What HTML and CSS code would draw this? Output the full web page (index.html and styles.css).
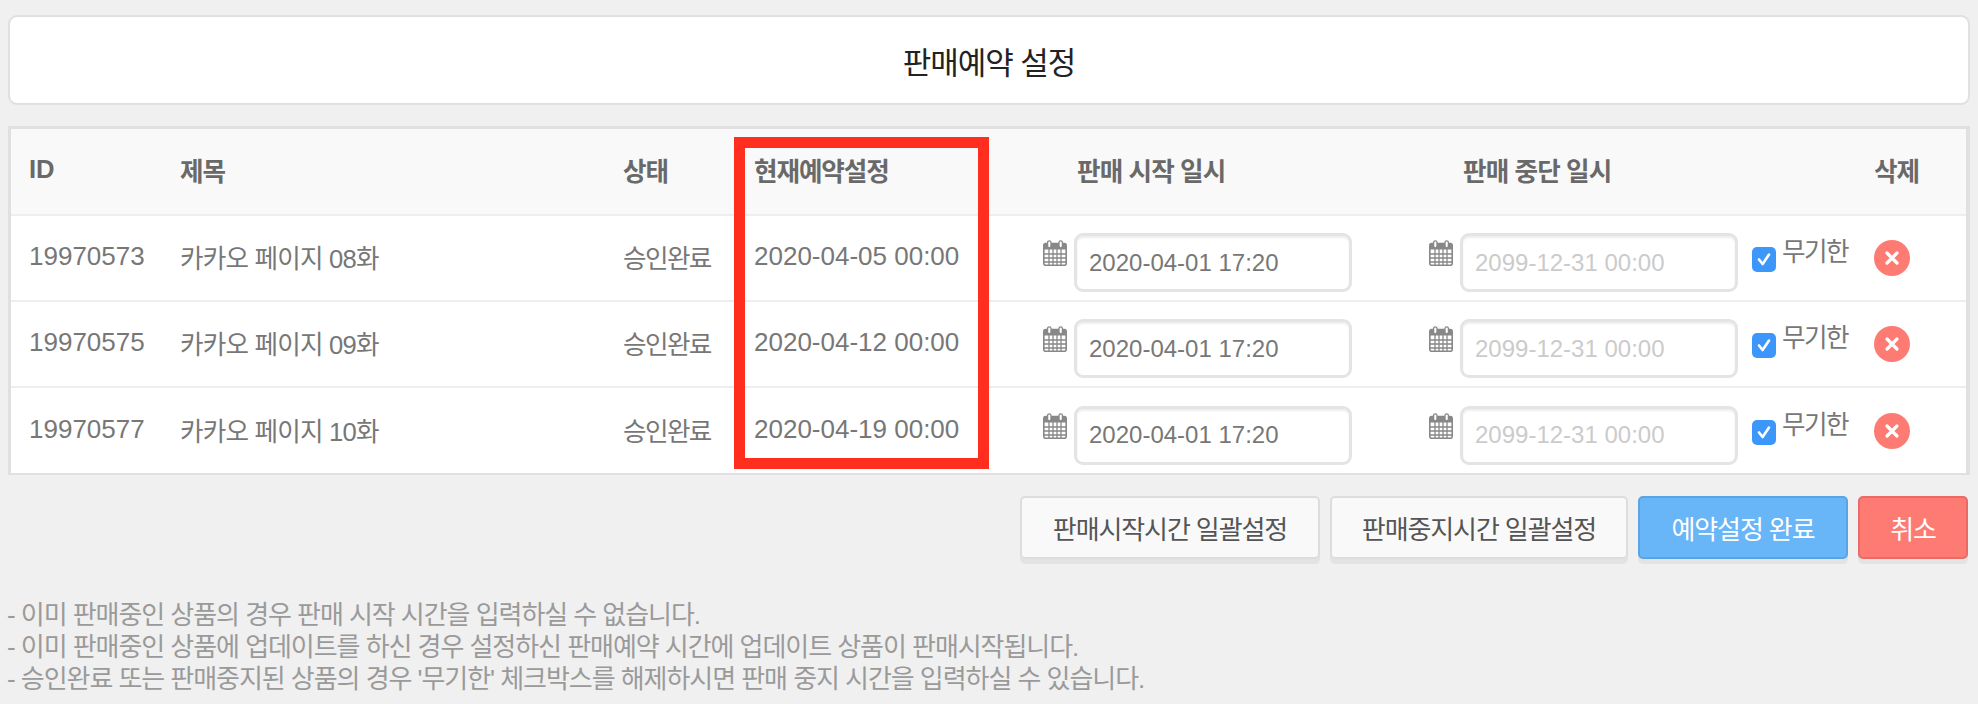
FILE: index.html
```html
<!DOCTYPE html>
<html lang="ko">
<head>
<meta charset="utf-8">
<title>판매예약 설정</title>
<link rel="stylesheet" href="styles.css">
</head>
<body>
<svg class="defs" width="0" height="0" aria-hidden="true">
  <symbol id="cal" viewBox="0 0 24 26">
    <rect x="0.8" y="3.5" width="22.4" height="21.7" rx="2" fill="#fff" stroke="#888" stroke-width="1.6"/>
    <rect x="1" y="3.5" width="22" height="6" fill="#888"/>
    <path d="M1 14h22M1 18h22M1 22h22M6 9v16M10 9v16M14 9v16M18 9v16" stroke="#888" stroke-width="1.3" fill="none"/>
    <rect x="4.6" y="0.8" width="3.4" height="7" rx="1.7" fill="#fff" stroke="#888" stroke-width="1.3"/>
    <rect x="16" y="0.8" width="3.4" height="7" rx="1.7" fill="#fff" stroke="#888" stroke-width="1.3"/>
  </symbol>
</svg>
<main class="page">
  <header class="title-card"><h1>판매예약 설정</h1></header>
  <section class="table-wrap">
    <table class="list">
      <colgroup>
        <col class="c-id"><col class="c-title"><col class="c-state"><col class="c-now"><col class="c-start"><col class="c-end"><col class="c-del">
      </colgroup>
      <thead>
        <tr>
          <th class="first id-head">ID</th><th>제목</th><th>상태</th><th>현재예약설정</th>
          <th class="pad-date">판매 시작 일시</th><th class="pad-date">판매 중단 일시</th><th>삭제</th>
        </tr>
      </thead>
      <tbody>
        <tr>
          <td class="first num">19970573</td><td class="ttl">카카오 페이지 08화</td><td class="state">승인완료</td><td class="num">2020-04-05 00:00</td>
          <td><div class="date"><svg class="cal"><use href="#cal"/></svg><input class="field" value="2020-04-01 17:20"></div></td>
          <td><div class="date"><svg class="cal"><use href="#cal"/></svg><input class="field end" placeholder="2099-12-31 00:00"><label class="unlimited"><span class="check"><svg viewBox="0 0 24 24" width="24" height="24"><path d="M7 12.5l3.6 4.5L17 7.5" fill="none" stroke="#fff" stroke-width="2.6" stroke-linecap="round" stroke-linejoin="round"/></svg></span><span class="ko">무기한</span></label></div></td>
          <td><button class="del" aria-label="삭제"><svg viewBox="0 0 36 36" width="36" height="36"><path d="M13 13l10 10M23 13l-10 10" stroke="#fff" stroke-width="3.2" stroke-linecap="round"/></svg></button></td>
        </tr>
        <tr>
          <td class="first num">19970575</td><td class="ttl">카카오 페이지 09화</td><td class="state">승인완료</td><td class="num">2020-04-12 00:00</td>
          <td><div class="date"><svg class="cal"><use href="#cal"/></svg><input class="field" value="2020-04-01 17:20"></div></td>
          <td><div class="date"><svg class="cal"><use href="#cal"/></svg><input class="field end" placeholder="2099-12-31 00:00"><label class="unlimited"><span class="check"><svg viewBox="0 0 24 24" width="24" height="24"><path d="M7 12.5l3.6 4.5L17 7.5" fill="none" stroke="#fff" stroke-width="2.6" stroke-linecap="round" stroke-linejoin="round"/></svg></span><span class="ko">무기한</span></label></div></td>
          <td><button class="del" aria-label="삭제"><svg viewBox="0 0 36 36" width="36" height="36"><path d="M13 13l10 10M23 13l-10 10" stroke="#fff" stroke-width="3.2" stroke-linecap="round"/></svg></button></td>
        </tr>
        <tr>
          <td class="first num">19970577</td><td class="ttl">카카오 페이지 10화</td><td class="state">승인완료</td><td class="num">2020-04-19 00:00</td>
          <td><div class="date"><svg class="cal"><use href="#cal"/></svg><input class="field" value="2020-04-01 17:20"></div></td>
          <td><div class="date"><svg class="cal"><use href="#cal"/></svg><input class="field end" placeholder="2099-12-31 00:00"><label class="unlimited"><span class="check"><svg viewBox="0 0 24 24" width="24" height="24"><path d="M7 12.5l3.6 4.5L17 7.5" fill="none" stroke="#fff" stroke-width="2.6" stroke-linecap="round" stroke-linejoin="round"/></svg></span><span class="ko">무기한</span></label></div></td>
          <td><button class="del" aria-label="삭제"><svg viewBox="0 0 36 36" width="36" height="36"><path d="M13 13l10 10M23 13l-10 10" stroke="#fff" stroke-width="3.2" stroke-linecap="round"/></svg></button></td>
        </tr>
      </tbody>
    </table>
    <div class="highlight"></div>
  </section>
  <div class="actions">
    <button class="btn first-btn">판매시작시간 일괄설정</button>
    <button class="btn">판매중지시간 일괄설정</button>
    <button class="btn blue">예약설정 완료</button>
    <button class="btn red">취소</button>
  </div>
  <ul class="notes">
    <li>- 이미 판매중인 상품의 경우 판매 시작 시간을 입력하실 수 없습니다.</li>
    <li>- 이미 판매중인 상품에 업데이트를 하신 경우 설정하신 판매예약 시간에 업데이트 상품이 판매시작됩니다.</li>
    <li>- 승인완료 또는 판매중지된 상품의 경우 '무기한' 체크박스를 해제하시면 판매 중지 시간을 입력하실 수 있습니다.</li>
  </ul>
</main>
</body>
</html>
```
FILE: styles.css
```css
* { box-sizing: border-box; }
html, body { margin: 0; height: 100%; }
body {
  background: #f0f0f0;
  font-family: "Liberation Sans", "Noto Sans CJK KR", sans-serif;
  color: #777;
  overflow: hidden;
}
.defs { position: absolute; }
.page { padding: 15px 8px 0; }
.title-card {
  height: 90px;
  background: #fff;
  border: 2px solid #e0e0e0;
  border-radius: 9px;
  display: flex;
  align-items: center;
  justify-content: center;
}
.title-card h1 {
  margin: 0;
  font-size: 31px;
  font-weight: 400;
  letter-spacing: -1px;
  color: #222;
}
.table-wrap {
  position: relative;
  margin-top: 21px;
  background: #fff;
  border: 3px solid #e0e0e0;
  border-bottom-width: 2px;
  border-right-width: 4px;
}
.list { width: 100%; border-collapse: collapse; table-layout: fixed; }
.c-id { width: 169px; }
.c-title { width: 443px; }
.c-state { width: 131px; }
.c-now { width: 289px; }
.c-start { width: 386px; }
.c-end { width: 445px; }
th {
  height: 86px;
  background: #f9f9f9;
  padding: 0 0 4px;
  text-align: left;
  font-size: 25.6px;
  font-weight: 700;
  letter-spacing: -1.1px;
  color: #696969;
  border-bottom: 2px solid #eee;
}
th.first { padding-left: 18px; }
th.id-head { letter-spacing: 0; }
th.pad-date { padding-left: 34px; letter-spacing: -0.9px; }
td {
  height: 86px;
  padding: 0;
  font-size: 24px;
  border-bottom: 2px solid #eee;
}
tbody tr:last-child td { border-bottom: 0; }
td.first { padding-left: 18px; }
.num { font-size: 26px; padding-bottom: 3px; }
.state { font-size: 25.6px; letter-spacing: -1.6px; padding-bottom: 3px; }
.ko { font-size: 25.6px; letter-spacing: -1.6px; }
.ttl { font-size: 25.6px; letter-spacing: -0.8px; padding-bottom: 3px; }
.date { display: flex; align-items: flex-start; padding-top: 9px; }
.cal { width: 24px; height: 26px; margin-top: 7px; flex: none; }
.field {
  width: 278px;
  height: 59px;
  margin-left: 7px;
  padding: 0 12px;
  border: 3px solid #e4e4e4;
  border-radius: 9px;
  box-shadow: inset 0 2px 2px #eee;
  background: #fff;
  font: 24px "Liberation Sans", sans-serif;
  color: #777;
  outline: 0;
}
.field::placeholder { color: #cbcbcb; opacity: 1; }
.unlimited { display: flex; align-items: flex-start; margin-left: 14px; margin-top: 4px; }
.unlimited .ko { line-height: 30px; margin-left: 6px; white-space: nowrap; }
.check {
  width: 24px;
  height: 25px;
  margin-top: 10px;
  background: #3d97fa;
  border-radius: 5px;
  flex: none;
}
.check svg { display: block; }
.del {
  display: block;
  width: 36px;
  height: 36px;
  padding: 0;
  border: 0;
  border-radius: 50%;
  background: #fd7b73;
}
.del svg { display: block; }
.highlight {
  position: absolute;
  left: 723px;
  top: 8px;
  width: 255px;
  height: 332px;
  border: 11px solid #ff2e1f;
}
.actions {
  display: flex;
  justify-content: flex-end;
  gap: 10px;
  margin-top: 21px;
  padding-right: 2px;
}
.btn {
  height: 63px;
  width: 298px;
  border: 2px solid #ddd;
  border-radius: 5px;
  background: #f9f9f9;
  box-shadow: 0 5px 0 #e3e3e3;
  font: 26px "Liberation Sans", "Noto Sans CJK KR", sans-serif;
  letter-spacing: -1.1px;
  color: #555;
  padding: 0;
}
.first-btn { width: 300px; }
.blue { width: 210px; background: #68b5f7; border-color: #5ba4e4; color: #fff; }
.red { width: 110px; background: #fd7b73; border-color: #ea6a66; color: #fff; }
.notes {
  list-style: none;
  margin: 40px 0 0 -1px;
  padding: 0;
  font-size: 26px;
  line-height: 32px;
  letter-spacing: -1.05px;
  color: #9a9a9a;
}
```
